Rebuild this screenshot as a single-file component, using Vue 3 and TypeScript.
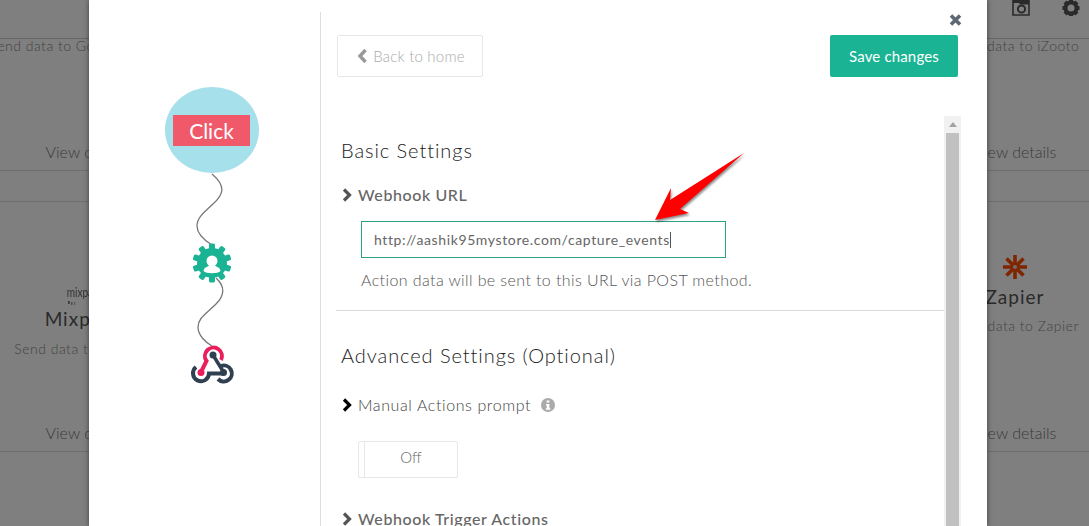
<template>
  <div class="page">
    <!-- page behind the dialog -->
    <div class="bg-top">
      <svg class="bg-icon" viewBox="0 0 18 16">
        <path d="M1 -1h16v16H1z" fill="none" stroke="#555" stroke-width="1.600" />
        <path d="M1 0h16v4.500H8L7 3H1z" fill="#555" />
        <circle cx="9.500" cy="9" r="3.600" fill="none" stroke="#555" stroke-width="2" />
      </svg>
      <svg class="bg-icon" viewBox="-9 -8 18 16">
        <circle r="5.500" fill="none" stroke="#555" stroke-width="4" />
        <g fill="#555">
          <rect v-for="a in [0, 45, 90, 135, 180, 225, 270, 315]" :key="a" x="-2" y="-8.500" width="4" height="4" :transform="`rotate(${a})`" />
        </g>
      </svg>
    </div>
    <div class="bg-grid bg-first">
      <div v-for="c in firstRow" :key="c" class="bg-card">
        <div class="bg-desc">{{ c }}</div>
        <div class="bg-link">View details</div>
      </div>
    </div>
    <div class="bg-grid bg-second">
      <div class="bg-card tall">
        <div class="bg-main mix">
          <div class="mix-logo">mixpanel<div class="mix-dots"></div></div>
          <div class="bg-title">Mixpanel</div>
          <div class="bg-desc">Send data to Mixpanel</div>
        </div>
        <div class="bg-link">View details</div>
      </div>
      <div class="bg-card tall">
        <div class="bg-main">
          <svg class="zap-logo" viewBox="-12 -12 24 24">
            <path d="M-12 0H-3M3 0H12M0 -12V-3M0 3V12M-8.500 -8.500L-2 -2M2 2L8.500 8.500M8.500 -8.500L2 -2M-2 2L-8.500 8.500" stroke="#ff4a00" stroke-width="3.600" />
            <circle r="3.500" fill="#ff4a00" />
            <circle r="2" fill="#ddd" />
          </svg>
          <div class="bg-title">Zapier</div>
          <div class="bg-desc">Send data to Zapier</div>
        </div>
        <div class="bg-link">View details</div>
      </div>
    </div>
    <div class="backdrop"></div>

    <!-- dialog -->
    <div class="modal">
      <aside class="flow">
        <svg class="flow-art" width="231" height="526" viewBox="89 0 231 526">
          <path d="M212 174C226 186 224 194 213 204C203 213 197 218 197 226C197 234 204 240 212 245" fill="none" stroke="#777" stroke-width="1.300" />
          <path d="M216 278C225 286 225 295 216 304C206 314 198 318 198 327C198 335 205 342 212 346" fill="none" stroke="#777" stroke-width="1.300" />
          <ellipse cx="212" cy="130" rx="47" ry="43" fill="#a6e0ea" />
          <rect x="173" y="115" width="77" height="31" fill="#f0596a" />
          <text x="211.500" y="139" text-anchor="middle" class="click-text">Click</text>
          <g transform="translate(212 263)" fill="#1ab394">
            <circle r="15" />
            <rect v-for="a in [0, 36, 72, 108, 144, 180, 216, 252, 288, 324]" :key="a" x="-3" y="-19.500" width="6" height="7" rx="1.500" :transform="`rotate(${a})`" />
            <circle cy="-2" r="5.500" fill="#fff" />
            <path d="M-8.500 8C-8 4 -4 3.500 -2.500 2.500H2.500C4 3.500 8 4 8.500 8C6 11 -6 11 -8.500 8Z" fill="#fff" />
          </g>
          <g fill="none" stroke-width="4">
            <path d="M213 355L223.500 372" stroke="#2f4050" stroke-width="3.500" />
            <path d="M196 367A8 8 0 1 0 209 373.500H223" stroke="#2f4050" />
            <path d="M221 366A8 8 0 1 1 218 379" stroke="#2f4050" />
            <path d="M221 360A8.500 8.500 0 1 0 206.500 361L201 372" stroke="#e91e5a" />
          </g>
          <circle cx="213" cy="355" r="3.500" fill="#2f4050" />
          <circle cx="223.500" cy="372.500" r="3.500" fill="#2f4050" />
          <circle cx="201" cy="372.500" r="3.500" fill="#e91e5a" />
        </svg>
      </aside>

      <main class="content">
        <svg class="close" viewBox="0 0 13 12">
          <path d="M2 1.500L11 10.500M11 1.500L2 10.500" stroke="#5d6872" stroke-width="3.600" />
        </svg>
        <header class="actions">
          <button class="btn back">
            <svg class="chev-left" viewBox="0 0 10 16"><path d="M8 2L2.500 8L8 14" fill="none" stroke="#999" stroke-width="3.400" /></svg>
            Back to home
          </button>
          <button class="btn save">Save changes</button>
        </header>

        <div class="scroll-wrap">
          <div class="scroll-body">
            <section class="block basic">
              <h2>Basic Settings</h2>
              <h3 class="label strong">
                <svg class="chev" viewBox="0 0 10 14"><path d="M2.500 1.500L8 7L2.500 12.500" fill="none" stroke="#555" stroke-width="3.200" /></svg>
                Webhook URL
              </h3>
              <div class="url-input"><span>{{ webhookUrl }}</span><i class="caret"></i></div>
              <p class="help">Action data will be sent to this URL via POST method.</p>
            </section>
            <section class="block advanced">
              <h2>Advanced Settings (Optional)</h2>
              <h3 class="label manual">
                <svg class="chev" viewBox="0 0 10 14"><path d="M2.500 1.500L8 7L2.500 12.500" fill="none" stroke="#000" stroke-width="3.200" /></svg>
                Manual Actions prompt
                <svg class="info" viewBox="0 0 14 14">
                  <circle cx="7" cy="7" r="7" fill="#aaa" />
                  <path d="M5.600 2.500h2.800v2h-2.800zM5 6h3.400v4.200h1v1.500h-4.600v-1.500h1v-2.600h-.8z" fill="#fff" />
                </svg>
              </h3>
              <div class="toggle"><span class="handle"></span><span class="off">Off</span></div>
              <h3 class="label strong last">
                <svg class="chev" viewBox="0 0 10 14"><path d="M2.500 1.500L8 7L2.500 12.500" fill="none" stroke="#555" stroke-width="3.200" /></svg>
                Webhook Trigger Actions
              </h3>
            </section>
          </div>
          <div class="scrollbar">
            <div class="sb-up"></div>
            <div class="sb-thumb"></div>
          </div>
        </div>
      </main>
    </div>

    <!-- annotation arrow -->
    <svg class="arrow" width="100" height="80" viewBox="650 148 100 80">
      <polygon points="744,153 670,200 671,188 655,220 689,213 680,209" fill="#fe0000" />
    </svg>
  </div>
</template>

<script setup lang="ts">
const firstRow: string[] = ['Send data to Google Analytics', 'Send data to iZooto']
const webhookUrl = 'http://aashik95mystore.com/capture_events'
</script>

<style scoped>
.page {
  position: relative;
  width: 1089px;
  height: 526px;
  overflow: hidden;
  background: #fff;
  font-family: Lato, "Open Sans", sans-serif;
}

/* background page */
.bg-top {
  height: 38px;
  border-bottom: 1px solid #ccc;
  display: flex;
  justify-content: flex-end;
  align-items: flex-start;
  gap: 32px;
  padding-right: 9px;
}
.bg-icon {
  width: 18px;
  height: 16px;
}
.bg-grid {
  display: grid;
  grid-template-columns: 174px 148px;
  justify-content: space-between;
}
.bg-first {
  height: 131px;
  border-bottom: 1px solid #ddd;
}
.bg-first .bg-desc {
  margin-top: -1px;
}
.bg-second {
  height: 249px;
  margin-top: 30px;
  border-top: 1px solid #ddd;
  border-bottom: 1px solid #ddd;
}
.bg-card {
  display: flex;
  flex-direction: column;
  align-items: center;
  justify-content: space-between;
  white-space: nowrap;
  padding-bottom: 8px;
}
.bg-desc {
  font-size: 14px;
  letter-spacing: .5px;
  font-weight: 300;
  color: #888;
  line-height: 16px;
}
.bg-link {
  font-size: 16px;
  color: #777;
  line-height: 20px;
  font-weight: 300;
}
.bg-main {
  display: flex;
  flex-direction: column;
  align-items: center;
  padding-top: 54px;
}
.bg-main.mix {
  padding-top: 83px;
}
.mix-logo {
  height: 13px;
  font-size: 14px;
  line-height: 14px;
  color: #666;
  transform: scaleX(.72);
}
.mix-dots {
  width: 2px;
  height: 3px;
  margin: 2px 0 0 2px;
  background: #555;
  box-shadow: 4px 1px 0 #999, 8px 1px 0 #bbb;
}
.zap-logo {
  width: 24px;
  height: 24px;
  margin-top: -1px;
}
.bg-title {
  font-size: 19px;
  letter-spacing: 1px;
  color: #555;
  line-height: 26px;
  margin-top: 5px;
}
.mix .bg-title {
  margin-top: 8px;
}
.bg-main .bg-desc {
  margin-top: 8px;
}
.bg-main.mix .bg-desc {
  margin-top: 9px;
}
.backdrop {
  position: absolute;
  inset: 0;
  background: rgba(0, 0, 0, .5);
}

/* dialog */
.modal {
  position: absolute;
  left: 89px;
  top: 0;
  width: 898px;
  height: 526px;
  background: #fff;
  box-shadow: 0 0 5px rgba(0, 0, 0, .5);
  display: flex;
}
.flow {
  width: 231px;
  height: 526px;
  flex: none;
}
.flow-art {
  display: block;
}
.click-text {
  font-family: Lato, sans-serif;
  font-size: 21px;
  font-weight: 400;
  fill: #fff;
}
.content {
  position: relative;
  flex: 1;
  min-width: 0;
  margin-top: 12px;
  border-left: 1px solid #ddd;
  padding: 23px 0 0 15px;
}
.close {
  position: absolute;
  right: 25px;
  top: 2px;
  width: 13px;
  height: 12px;
}
.actions {
  width: 621px;
  height: 42px;
  margin-left: 1px;
  display: flex;
  justify-content: space-between;
}
.btn {
  height: 42px;
  border-radius: 2px;
  font-family: inherit;
  font-size: 15px;
  font-weight: 400;
  cursor: pointer;
  display: flex;
  align-items: center;
  justify-content: center;
}
.back {
  width: 146px;
  background: #fff;
  border: 1px solid #e7e7e7;
  color: #aaa;
  font-weight: 300;
  letter-spacing: .2px;
  gap: 5px;
  padding: 0 0 0 2px;
}
.chev-left {
  width: 11px;
  height: 16px;
}
.save {
  width: 128px;
  background: #1ab394;
  border: 0;
  color: #fff;
  letter-spacing: .15px;
}
.scroll-wrap {
  display: flex;
  height: 410px;
  margin-top: 39px;
  width: 625px;
}
.scroll-body {
  width: 608px;
  overflow: hidden;
  flex: none;
}
.block {
  padding-left: 5px;
}
.basic {
  height: 195px;
  box-sizing: border-box;
  padding-top: 22px;
  border-bottom: 1px solid #d9d9d9;
}
.advanced {
  padding-top: 32px;
}
h2 {
  margin: 0;
  font-size: 20px;
  font-weight: 300;
  letter-spacing: .93px;
  line-height: 24px;
  color: #222;
}
.label {
  margin: 23px 0 0;
  font-size: 16px;
  font-weight: 400;
  line-height: 20px;
  letter-spacing: .6px;
  color: #777;
  display: flex;
  align-items: center;
  gap: 6px;
}
.label.strong {
  font-weight: 500;
  color: #666;
}
.label.manual {
  margin-top: 28px;
  font-weight: 300;
  color: #444;
}
.chev {
  width: 11px;
  height: 14px;
}
.info {
  width: 14px;
  height: 14px;
  margin-left: 4px;
}
.url-input {
  margin: 16px 0 0 20px;
  width: 365px;
  height: 37px;
  box-sizing: border-box;
  border: 1px solid #2fa084;
  padding-left: 12px;
  font-size: 14px;
  letter-spacing: .62px;
  color: #666;
  display: flex;
  align-items: center;
}
.caret {
  width: 1px;
  height: 16px;
  background: #555;
}
.help {
  margin: 12px 0 0 20px;
  font-size: 16px;
  font-weight: 300;
  letter-spacing: .4px;
  line-height: 20px;
  color: #555;
}
.toggle {
  width: 100px;
  height: 37px;
  margin: 26px 0 0 17px;
  box-sizing: border-box;
  border: 1px solid #e7e7e7;
  border-radius: 2px;
  display: flex;
  align-items: center;
}
.handle {
  width: 5px;
  height: 100%;
  border-right: 1px solid #e7e7e7;
}
.off {
  flex: 1;
  text-align: center;
  font-size: 15px;
  font-weight: 300;
  color: #666;
  margin-top: -5px;
}
.last {
  margin-top: 31px;
}
.scrollbar {
  width: 17px;
  background: #f1f1f1;
  display: flex;
  flex-direction: column;
  align-items: center;
}
.sb-up {
  width: 0;
  height: 0;
  margin: 6px 0 6px;
  border: 4px solid transparent;
  border-top: 0;
  border-bottom: 5px solid #a3a3a3;
}
.sb-thumb {
  flex: 1;
  width: 13px;
  background: #c1c1c1;
}
.arrow {
  position: absolute;
  left: 650px;
  top: 148px;
  filter: drop-shadow(1px 2px 1px rgba(0, 0, 0, .45));
}
</style>
